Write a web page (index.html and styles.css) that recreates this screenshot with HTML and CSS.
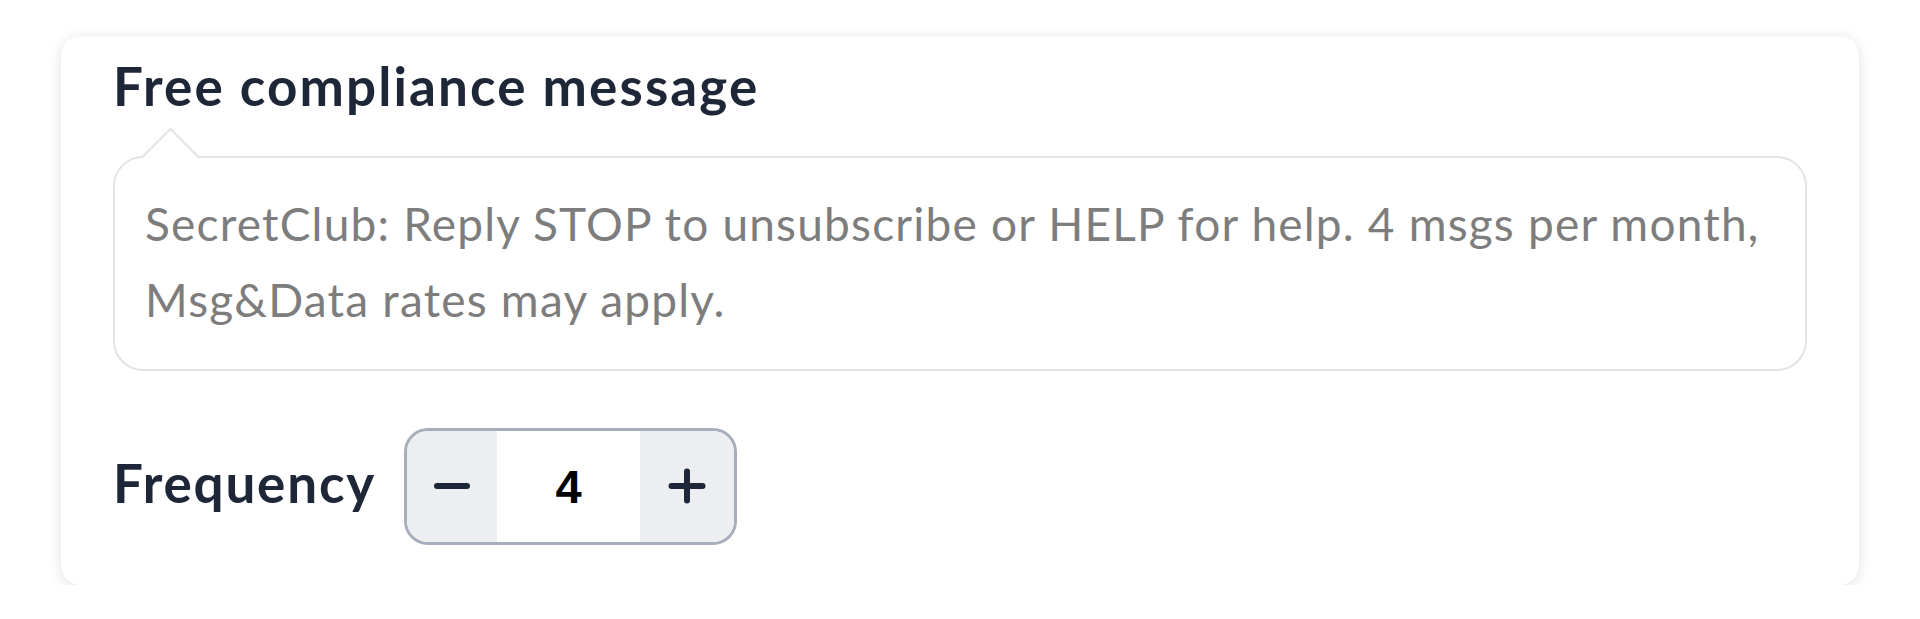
FILE: index.html
```html
<!DOCTYPE html>
<html lang="en">
<head>
<meta charset="utf-8">
<title>Free compliance message</title>
<link rel="stylesheet" href="styles.css">
</head>
<body>
<section class="card">
  <h2 class="title">Free compliance message</h2>
  <div class="bubble">
    <p class="bubble-text">SecretClub: Reply STOP to unsubscribe or HELP for help. 4 msgs per month,<br>Msg&amp;Data rates may apply.</p>
  </div>
  <div class="freq-row">
    <span class="freq-label">Frequency</span>
    <div class="stepper">
      <button class="step-btn" type="button" aria-label="Decrease">
        <svg viewBox="0 0 40 40" width="40" height="40"><path d="M5 20H35" /></svg>
      </button>
      <span class="step-value">4</span>
      <button class="step-btn step-plus" type="button" aria-label="Increase">
        <svg viewBox="0 0 40 40" width="40" height="40"><path d="M4.5 20H35.5M20 5.5V34.5" /></svg>
      </button>
    </div>
  </div>
</section>
</body>
</html>
```
FILE: styles.css
```css
html, body {
  margin: 0;
  padding: 0;
  background: #ffffff;
}

body {
  padding-top: 36px;
  font-family: "Lato", "Liberation Sans", sans-serif;
}

.card {
  margin: 0 61px;
  padding: 18px 52px 40px;
  background: #ffffff;
  border-radius: 20px;
  box-shadow: 0 2px 14px rgba(0, 0, 0, 0.12);
}

.title {
  margin: 0;
  font-size: 53px;
  font-weight: 700;
  line-height: 1.2;
  letter-spacing: 2.1px;
  color: #1e2738;
}

.bubble {
  position: relative;
  margin-top: 38px;
  border: 2px solid #e3e3e6;
  border-radius: 30px;
  padding: 28px 30px 31px;
}

.bubble::before {
  content: "";
  position: absolute;
  left: 35px;
  top: -22px;
  width: 41px;
  height: 41px;
  box-sizing: border-box;
  background: #ffffff;
  border-top: 2px solid #e3e3e6;
  border-left: 2px solid #e3e3e6;
  transform: rotate(45deg);
}

.bubble-text {
  position: relative;
  margin: 0;
  font-size: 46px;
  line-height: 76px;
  letter-spacing: 1.2px;
  color: #7d7d7d;
}

.freq-row {
  display: flex;
  align-items: center;
  gap: 28px;
  margin-top: 57px;
}

.freq-label {
  font-size: 53px;
  font-weight: 700;
  line-height: 1.2;
  letter-spacing: 1.8px;
  color: #1e2738;
  margin-bottom: 6px;
}

.stepper {
  display: flex;
  height: 117px;
  box-sizing: border-box;
  border: 3px solid #a6adbb;
  border-radius: 24px;
  overflow: hidden;
}

.step-btn {
  display: flex;
  align-items: center;
  justify-content: center;
  width: 90px;
  padding: 0;
  border: 0;
  background: #eceef2;
}

.step-plus {
  width: 94px;
}

.step-btn svg {
  fill: none;
  stroke: #1e2738;
  stroke-width: 6;
  stroke-linecap: round;
}

.step-value {
  display: flex;
  align-items: center;
  justify-content: center;
  width: 143px;
  font-family: "Liberation Sans", Arial, sans-serif;
  font-weight: 700;
  font-size: 47px;
  color: #000000;
}
```
